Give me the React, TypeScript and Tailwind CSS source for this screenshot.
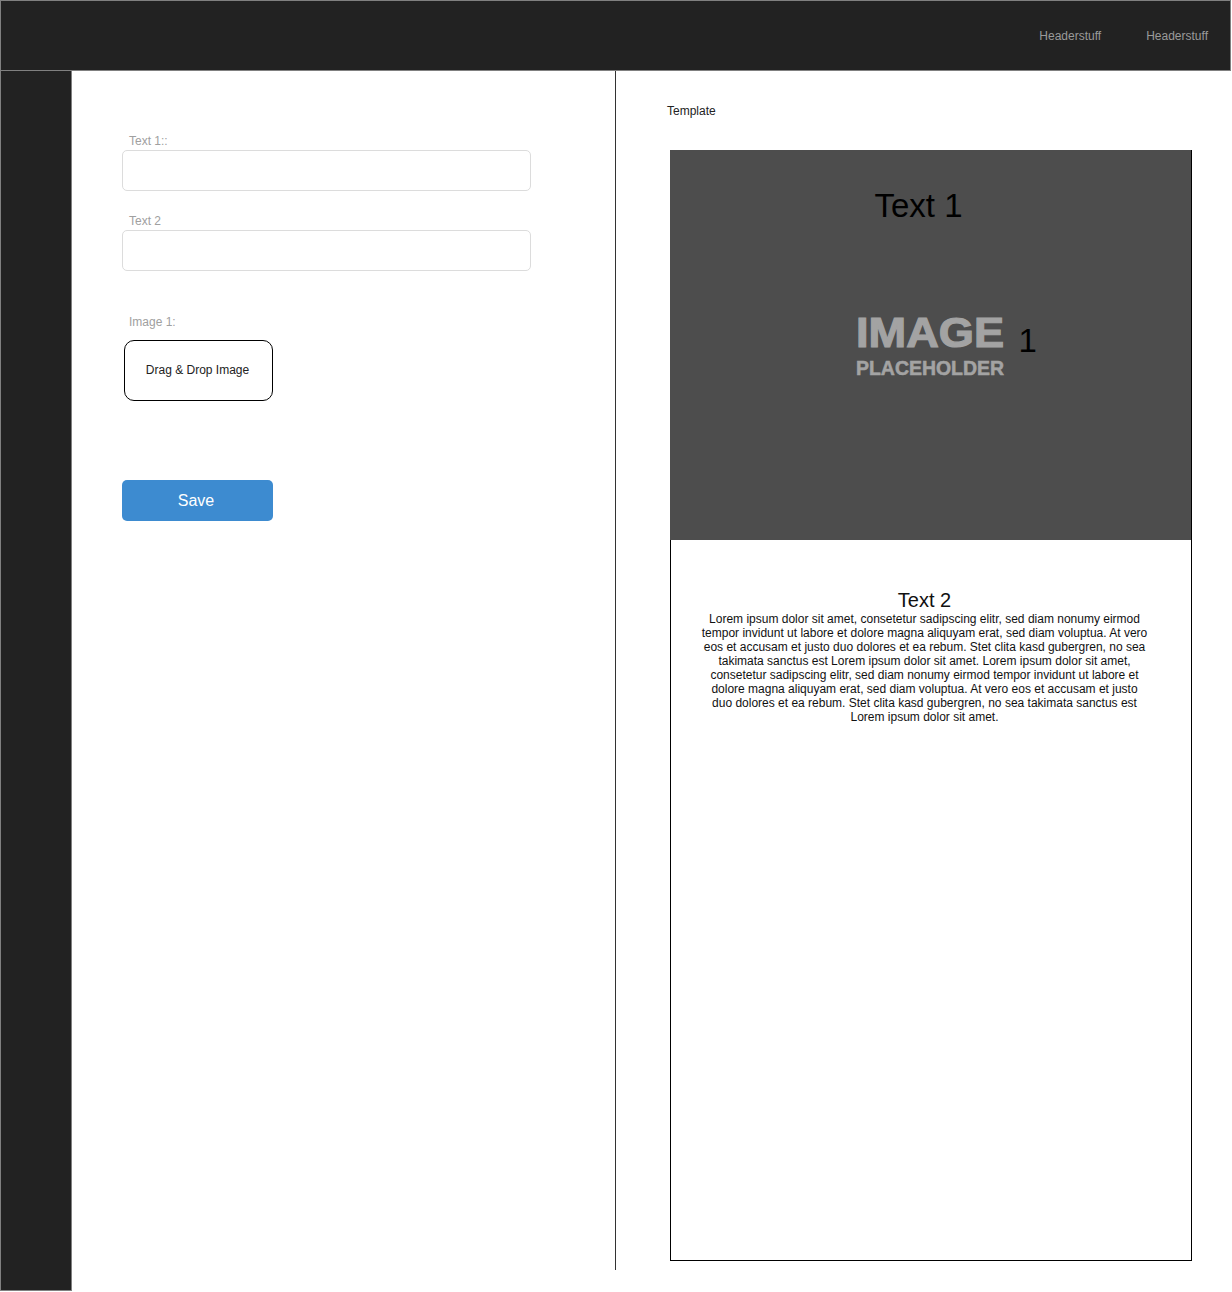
import React from "react";

const LOREM =
  "Lorem ipsum dolor sit amet, consetetur sadipscing elitr, sed diam nonumy eirmod tempor invidunt ut labore et dolore magna aliquyam erat, sed diam voluptua. At vero eos et accusam et justo duo dolores et ea rebum. Stet clita kasd gubergren, no sea takimata sanctus est Lorem ipsum dolor sit amet. Lorem ipsum dolor sit amet, consetetur sadipscing elitr, sed diam nonumy eirmod tempor invidunt ut labore et dolore magna aliquyam erat, sed diam voluptua. At vero eos et accusam et justo duo dolores et ea rebum. Stet clita kasd gubergren, no sea takimata sanctus est Lorem ipsum dolor sit amet.";

const Field = ({ label, className }: { label: string; className?: string }) => (
  <div className={className}>
    <label className="block pl-[7px] text-[12px] leading-[14px] text-[#a0a0a0]">
      {label}
    </label>
    <input
      type="text"
      className="mt-[2px] block h-[41px] w-[409px] rounded-[5px] border border-[#dcdcdc] bg-white px-3 text-[14px] outline-none"
    />
  </div>
);

// Grey "IMAGE PLACEHOLDER" picture drawn as svg text
const Placeholder = () => (
  <svg width="152" height="72" viewBox="0 0 152 72" className="overflow-visible">
    <text
      x="1"
      y="37"
      fontFamily="'Liberation Sans', Arial, sans-serif"
      fontWeight="bold"
      fontSize="42"
      fill="#a3a3a3"
      stroke="#a3a3a3"
      strokeWidth="1.2"
      textLength="148"
      lengthAdjust="spacingAndGlyphs"
    >
      IMAGE
    </text>
    <text
      x="1"
      y="65"
      fontFamily="'Liberation Sans', Arial, sans-serif"
      fontWeight="bold"
      fontSize="21"
      fill="#a3a3a3"
      stroke="#a3a3a3"
      strokeWidth="0.6"
      textLength="148"
      lengthAdjust="spacingAndGlyphs"
    >
      PLACEHOLDER
    </text>
  </svg>
);

export default function App() {
  return (
    <div className="h-[1292px] w-[1232px] bg-white font-['Liberation_Sans',Arial,sans-serif] text-[#222]">
      {/* header */}
      <header className="flex h-[71px] w-[1231px] items-center justify-end gap-[45px] border border-[#808080] bg-[#222222] pr-[22px]">
        <span className="text-[12px] text-[#9a9a9a]">Headerstuff</span>
        <span className="text-[12px] text-[#9a9a9a]">Headerstuff</span>
      </header>

      <div className="flex">
        {/* sidebar */}
        <aside className="h-[1220px] w-[72px] shrink-0 border-x border-b border-[#808080] bg-[#222222]" />

        {/* form panel */}
        <section className="h-[1199px] w-[544px] shrink-0 border-r border-[#333] pl-[50px] pt-[63px]">
          <Field label="Text 1::" />
          <Field label="Text 2" className="mt-[23px]" />

          <div className="mt-[44px]">
            <label className="block pl-[7px] text-[12px] leading-[14px] text-[#a0a0a0]">
              Image 1:
            </label>
            <div className="ml-[2px] mt-[11px] flex h-[61px] w-[149px] items-center justify-center rounded-[10px] border border-black pb-px pr-[2px] text-[12px] text-[#222]">
              Drag &amp; Drop Image
            </div>
          </div>

          <button
            type="button"
            className="mt-[79px] flex h-[41px] w-[151px] items-center justify-center rounded-[5px] bg-[#3d8bd0] pr-[3px] text-[16px] text-white"
          >
            Save
          </button>
        </section>

        {/* template preview */}
        <section className="flex-1 pt-[33px]">
          <p className="pl-[51px] text-[12px] leading-[14px] text-[#222]">Template</p>

          <div className="ml-[54px] mt-[32px] h-[1111px] w-[522px] border border-black">
            <div className="-ml-px -mt-px flex h-[390px] w-[521px] flex-col items-center bg-[#4d4d4d] pt-[39px]">
              <h2 className="mr-[24px] text-[33px] leading-[33px] text-black">Text 1</h2>
              <div className="relative mt-[88px]">
                <Placeholder />
                <span className="absolute left-full top-[14px] ml-[12px] text-[33px] leading-[33px] text-black">
                  1
                </span>
              </div>
            </div>

            <div className="pl-[30px] pr-[43px] pt-[49px] text-center">
              <h3 className="text-[20px] leading-[23px] text-[#111]">Text 2</h3>
              <p className="text-[12px] leading-[14px] text-[#111]">{LOREM}</p>
            </div>
          </div>
        </section>
      </div>
    </div>
  );
}
